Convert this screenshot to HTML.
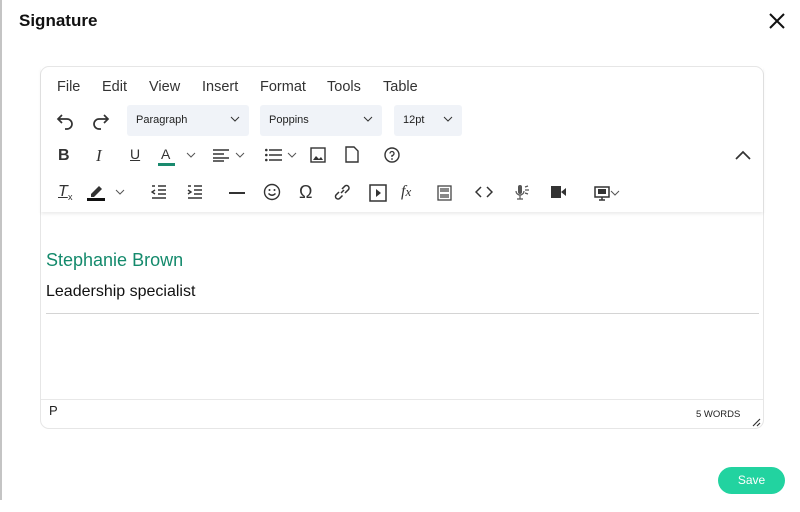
<!DOCTYPE html>
<html><head><style>
*{box-sizing:border-box;margin:0;padding:0}
body{width:800px;height:512px;background:#fff;font-family:"Liberation Sans",sans-serif;position:relative;overflow:hidden;color:#222}
.lb{position:absolute;left:0;top:0;width:2px;height:500px;background:#c4c4c4}
h1{position:absolute;left:19px;top:11px;font-size:17px;font-weight:bold;color:#111}
.x{position:absolute;left:766px;top:10px;width:22px;height:22px}
.ed{position:absolute;left:40px;top:66px;width:724px;height:363px;border:1px solid #e6e6e6;border-radius:9px}
.tb{position:absolute;left:0;top:0;width:722px;height:145px;box-shadow:0 2px 3px rgba(0,0,0,.08)}
.a{position:absolute}
.menu{top:12px;font-size:14.5px;color:#333}
.dd{position:absolute;top:38px;height:31px;background:#f0f3f8;border-radius:3px;font-size:11px;padding:9px 0 0 9px;color:#222}
.dd svg{position:absolute;right:9px;top:11px}
svg.i{position:absolute}
.c{position:absolute;font-size:14px}
</style></head><body>
<div class="lb"></div>
<h1>Signature</h1>
<svg class="x" viewBox="0 0 22 22"><path d="M4 4L18 18M18 4L4 18" stroke="#111" stroke-width="2"/></svg>
<div class="ed">
<div class="tb">
<span class="a menu" style="left:16px">File</span>
<span class="a menu" style="left:61px">Edit</span>
<span class="a menu" style="left:108px">View</span>
<span class="a menu" style="left:161px">Insert</span>
<span class="a menu" style="left:219px">Format</span>
<span class="a menu" style="left:286px">Tools</span>
<span class="a menu" style="left:342px">Table</span>
<svg class="i" style="left:14px;top:44px" width="20" height="20" viewBox="0 0 20 20"><path d="M7 4L3 8L7 12M3 8H12A5 5 0 0 1 12 18H10" fill="none" stroke="#333" stroke-width="1.7"/></svg>
<svg class="i" style="left:50px;top:44px" width="20" height="20" viewBox="0 0 20 20"><path d="M13 4L17 8L13 12M17 8H8A5 5 0 0 0 8 18H10" fill="none" stroke="#333" stroke-width="1.7"/></svg>
<div class="dd" style="left:86px;width:122px">Paragraph<svg width="10" height="6"><path d="M1 1L5 5L9 1" fill="none" stroke="#333"/></svg></div>
<div class="dd" style="left:219px;width:122px">Poppins<svg width="10" height="6"><path d="M1 1L5 5L9 1" fill="none" stroke="#333"/></svg></div>
<div class="dd" style="left:353px;width:68px">12pt<svg width="10" height="6"><path d="M1 1L5 5L9 1" fill="none" stroke="#333"/></svg></div>
<span class="a" style="left:17px;top:80px;font-size:16px;font-weight:bold;color:#333">B</span>
<span class="a" style="left:55px;top:79px;font-size:17px;font-style:italic;font-family:'Liberation Serif',serif;color:#333">I</span>
<span class="a" style="left:89px;top:79px;font-size:14px;text-decoration:underline;color:#333">U</span>
<span class="a" style="left:120px;top:79px;font-size:14px;color:#333">A</span>
<div class="a" style="left:117px;top:96px;width:17px;height:3px;background:#1a8a6e"></div>
<svg class="i" style="left:145px;top:85px" width="10" height="6"><path d="M1 1L5 5L9 1" fill="none" stroke="#555"/></svg>
<svg class="i" style="left:172px;top:81px" width="18" height="14"><path d="M0 2H16M0 6H11M0 10H16M0 13H11" stroke="#333" stroke-width="1.5"/></svg>
<svg class="i" style="left:194px;top:85px" width="10" height="6"><path d="M1 1L5 5L9 1" fill="none" stroke="#555"/></svg>
<svg class="i" style="left:224px;top:81px" width="18" height="14"><path d="M4 2H17M4 7H17M4 12H17" stroke="#333" stroke-width="1.5"/><circle cx="1.3" cy="2" r="1.3" fill="#333"/><circle cx="1.3" cy="7" r="1.3" fill="#333"/><circle cx="1.3" cy="12" r="1.3" fill="#333"/></svg>
<svg class="i" style="left:246px;top:85px" width="10" height="6"><path d="M1 1L5 5L9 1" fill="none" stroke="#555"/></svg>
<svg class="i" style="left:269px;top:80px" width="16" height="16"><rect x="1" y="1" width="14" height="14" fill="none" stroke="#333" stroke-width="1.4"/><path d="M3 13L6 9L9 12L11 10L13 13Z" fill="#333"/></svg>
<svg class="i" style="left:304px;top:79px" width="14" height="17"><path d="M1 1H9L13 5V16H1Z" fill="none" stroke="#333" stroke-width="1.4"/></svg>
<svg class="i" style="left:343px;top:80px" width="16" height="16"><circle cx="8" cy="8" r="7" fill="none" stroke="#333" stroke-width="1.4"/><path d="M6 6.5A2 2 0 1 1 8 8.5V10" fill="none" stroke="#333" stroke-width="1.3"/><circle cx="8" cy="12" r=".9" fill="#333"/></svg>
<svg class="i" style="left:694px;top:83px" width="16" height="10"><path d="M1 9L8 2L15 9" fill="none" stroke="#333" stroke-width="1.7"/></svg>
<span class="a" style="left:17px;top:116px;font-size:16px;font-style:italic;text-decoration:underline;color:#333">T</span><span class="a" style="left:27px;top:125px;font-size:9px;color:#333">x</span>
<svg class="i" style="left:46px;top:116px" width="20" height="18"><path d="M4 11L12 3L15 6L7 14H4Z" fill="#333"/><rect x="0" y="15" width="18" height="3" fill="#111"/></svg>
<svg class="i" style="left:74px;top:122px" width="10" height="6"><path d="M1 1L5 5L9 1" fill="none" stroke="#555"/></svg>
<svg class="i" style="left:110px;top:118px" width="16" height="14"><path d="M7 1H15M7 5H15M7 9H15M1 13H15M1 1H4M4 5L1 7L4 9" fill="none" stroke="#333" stroke-width="1.4"/></svg>
<svg class="i" style="left:146px;top:118px" width="16" height="14"><path d="M7 1H15M7 5H15M7 9H15M1 13H15M1 1H4M1 5L4 7L1 9" fill="none" stroke="#333" stroke-width="1.4"/></svg>
<div class="a" style="left:188px;top:125px;width:16px;height:2px;background:#333"></div>
<svg class="i" style="left:222px;top:116px" width="18" height="18"><circle cx="9" cy="9" r="7.5" fill="none" stroke="#333" stroke-width="1.4"/><circle cx="6.5" cy="7" r="1" fill="#333"/><circle cx="11.5" cy="7" r="1" fill="#333"/><path d="M5.5 10.5Q9 14 12.5 10.5" fill="none" stroke="#333" stroke-width="1.4"/></svg>
<span class="a" style="left:258px;top:115px;font-size:18px;color:#333">Ω</span>
<svg class="i" style="left:292px;top:116px" width="18" height="18"><path d="M8 10L11 7M6 9L3 12A2.5 2.5 0 0 0 6.5 15.5L9.5 12.5M9 6L12 3A2.5 2.5 0 0 1 15.5 6.5L12 10" fill="none" stroke="#333" stroke-width="1.5"/></svg>
<svg class="i" style="left:328px;top:117px" width="18" height="18"><rect x="1" y="1" width="16" height="16" fill="none" stroke="#333" stroke-width="1.5"/><path d="M7 5L12 9L7 13Z" fill="#333"/></svg>
<span class="a" style="left:360px;top:116px;font-size:16px;font-style:italic;font-family:'Liberation Serif',serif;color:#333">f<span style="font-size:13px">x</span></span>
<svg class="i" style="left:396px;top:118px" width="15" height="16"><rect x="1" y="1" width="13" height="14" fill="none" stroke="#444" stroke-width="1.3"/><rect x="3" y="3" width="9" height="4" fill="#888"/><rect x="3" y="9" width="9" height="4" fill="#888"/></svg>
<svg class="i" style="left:434px;top:119px" width="18" height="12"><path d="M6 1L1 6L6 11M12 1L17 6L12 11" fill="none" stroke="#333" stroke-width="1.5"/></svg>
<svg class="i" style="left:473px;top:117px" width="16" height="18"><rect x="4" y="1" width="4" height="9" rx="2" fill="#555"/><path d="M2 7A4 4 0 0 0 10 7M6 11V15M3 15H9M11 3L14 2M11 6H15M11 9L14 10" fill="none" stroke="#555" stroke-width="1.2"/></svg>
<svg class="i" style="left:510px;top:119px" width="16" height="12"><rect x="0" y="0" width="10" height="12" fill="#333"/><path d="M10 6L15 2V10Z" fill="#333"/></svg>
<svg class="i" style="left:553px;top:119px" width="16" height="15"><rect x="1" y="1" width="14" height="10" fill="none" stroke="#333" stroke-width="1.5"/><rect x="4" y="3" width="8" height="5" fill="#333"/><path d="M8 11V14M5 14H11" stroke="#333" stroke-width="1.5"/></svg>
<svg class="i" style="left:569px;top:123px" width="10" height="6"><path d="M1 1L5 5L9 1" fill="none" stroke="#555"/></svg>
</div>
<div class="c" style="left:5px;top:183px;font-size:18px;color:#148a6c">Stephanie Brown</div>
<div class="c" style="left:5px;top:216px;font-size:16px;color:#111">Leadership specialist</div>
<div class="a" style="left:5px;top:246px;width:713px;height:1px;background:#d4d4d4"></div>
<div class="a" style="left:0;top:332px;width:722px;height:1px;background:#e8e8e8"></div>
<span class="a" style="left:8px;top:336px;font-size:13px">P</span>
<span class="a" style="left:655px;top:342px;font-size:9.5px">5 WORDS</span>
<svg class="i" style="left:711px;top:351px" width="9" height="9"><path d="M1 8L8 1M5 8L8 5" stroke="#333" stroke-width="1.2"/></svg>
</div>
<div class="a" style="left:718px;top:467px;width:67px;height:27px;border-radius:14px;background:#22d3a0;color:#fff;font-size:12px;text-align:center;line-height:27px">Save</div>
</body></html>
